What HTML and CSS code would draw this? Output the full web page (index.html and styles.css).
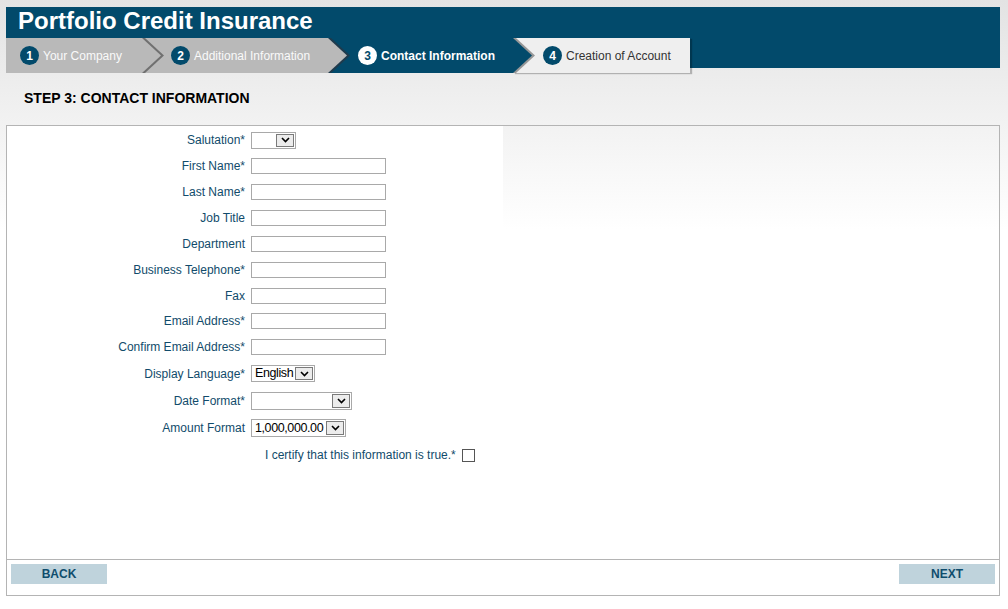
FILE: index.html
```html
<!DOCTYPE html>
<html lang="en">
<head>
    <meta charset="UTF-8">
    <meta name="viewport" content="width=device-width, initial-scale=1.0">
    <title>Portfolio Credit Insurance - Contact Information</title>
    <link rel="stylesheet" href="styles.css">
</head>
<body>
    <div class="header">
        <h1 class="title">Portfolio Credit Insurance</h1>
        <ol class="steps">
            <li class="step step-1"><span class="num">1</span>Your Company</li>
            <li class="step step-2"><span class="num">2</span>Additional Information</li>
            <li class="step step-3"><span class="num">3</span>Contact Information</li>
            <li class="step step-4"><span class="num">4</span>Creation of Account</li>
        </ol>
    </div>

    <h2 class="step-title">STEP 3: CONTACT INFORMATION</h2>

    <div class="panel">
        <form class="form">
            <div class="row">
                <label class="label">Salutation*</label>
                <span class="select sel-salutation">
                    <select><option></option><option>Mr</option><option>Mrs</option></select>
                    <span class="arrow"><svg width="9" height="6" viewBox="0 0 9 6"><polyline points="1,1 4.5,4.5 8,1" fill="none" stroke="#000" stroke-width="1.6"/></svg></span>
                </span>
            </div>
            <div class="row">
                <label class="label">First Name*</label>
                <input type="text" class="field">
            </div>
            <div class="row">
                <label class="label">Last Name*</label>
                <input type="text" class="field">
            </div>
            <div class="row">
                <label class="label">Job Title</label>
                <input type="text" class="field">
            </div>
            <div class="row">
                <label class="label">Department</label>
                <input type="text" class="field">
            </div>
            <div class="row">
                <label class="label">Business Telephone*</label>
                <input type="text" class="field">
            </div>
            <div class="row row-short">
                <label class="label">Fax</label>
                <input type="text" class="field">
            </div>
            <div class="row">
                <label class="label">Email Address*</label>
                <input type="text" class="field">
            </div>
            <div class="row">
                <label class="label">Confirm Email Address*</label>
                <input type="text" class="field">
            </div>
            <div class="row row-select">
                <label class="label">Display Language*</label>
                <span class="select sel-language">
                    <select><option>English</option></select>
                    <span class="arrow"><svg width="9" height="6" viewBox="0 0 9 6"><polyline points="1,1 4.5,4.5 8,1" fill="none" stroke="#000" stroke-width="1.6"/></svg></span>
                </span>
            </div>
            <div class="row row-select">
                <label class="label">Date Format*</label>
                <span class="select sel-date">
                    <select><option></option></select>
                    <span class="arrow"><svg width="9" height="6" viewBox="0 0 9 6"><polyline points="1,1 4.5,4.5 8,1" fill="none" stroke="#000" stroke-width="1.6"/></svg></span>
                </span>
            </div>
            <div class="row row-amount">
                <label class="label">Amount Format</label>
                <span class="select sel-amount">
                    <select><option>1,000,000.00</option></select>
                    <span class="arrow"><svg width="9" height="6" viewBox="0 0 9 6"><polyline points="1,1 4.5,4.5 8,1" fill="none" stroke="#000" stroke-width="1.6"/></svg></span>
                </span>
            </div>
            <div class="row row-certify">
                <label class="certify">I certify that this information is true.* <input type="checkbox" class="check"></label>
            </div>
        </form>

        <div class="footer">
            <button type="button" class="btn">BACK</button>
            <button type="button" class="btn">NEXT</button>
        </div>
    </div>
</body>
</html>
```

FILE: styles.css
```css
html {
    background-color: #fff;
}

body {
    margin: 0;
    padding: 7px 8px 0 6px;
    font-family: "Liberation Sans", Arial, sans-serif;
    font-size: 12px;
    background: linear-gradient(to bottom, #e3e3e3 0, #ffffff 230px) no-repeat;
}

/* header with title and step tabs */
.header {
    background: linear-gradient(to bottom, #024a6b 61px, transparent 61px);
}

.title {
    margin: 0;
    padding: 0 0 5px 12px;
    height: 26px;
    line-height: 27px;
    font-size: 24px;
    font-weight: bold;
    color: #fff;
}

.steps {
    display: flex;
    margin: 0;
    padding: 0;
    list-style: none;
}

.step {
    position: relative;
    display: flex;
    align-items: center;
    box-sizing: border-box;
    height: 35px;
    font-size: 12px;
    white-space: nowrap;
}

.step::before,
.step::after {
    content: "";
    position: absolute;
    top: 0;
    left: 100%;
    height: 35px;
}

.step::before {
    width: 19px;
    z-index: 2;
    clip-path: polygon(0 0, 19px 50%, 0 100%);
}

.step::after {
    width: 22px;
    z-index: 1;
    clip-path: polygon(0 0, 3px 0, 22px 50%, 3px 100%, 0 100%);
}

.num {
    display: inline-flex;
    align-items: center;
    justify-content: center;
    width: 19px;
    height: 19px;
    margin-right: 4px;
    border-radius: 50%;
    background-color: #024a6b;
    color: #fff;
    font-weight: bold;
    font-size: 12px;
}

.step-1 {
    width: 136px;
    padding-left: 14px;
    background-color: #b9b9b9;
    color: #fafafa;
}

.step-1::before { background-color: #b9b9b9; }
.step-1::after { background-color: #707070; }

.step-2 {
    width: 186px;
    padding-left: 29px;
    background-color: #b9b9b9;
    color: #fafafa;
}

.step-2::before { background-color: #b9b9b9; }
.step-2::after { background-color: #1f3b4d; }

.step-3 {
    width: 185px;
    padding-left: 30px;
    background-color: #024a6b;
    color: #fff;
    font-weight: bold;
}

.step-3::before { background-color: #024a6b; }
.step-3::after { background-color: #979797; }

.step-3 .num {
    background-color: #fff;
    color: #024a6b;
}

.step-4 {
    width: 177px;
    padding-left: 30px;
    background-color: #efefef;
    color: #333;
    box-shadow: 2px 1px 1px rgba(0, 0, 0, 0.25);
}

.step-4::before,
.step-4::after {
    display: none;
}

.step-title {
    margin: 0;
    padding: 17px 0 19px 18px;
    font-size: 14px;
    line-height: 16px;
    font-weight: bold;
    color: #000;
}

/* form panel */
.panel {
    border: 1px solid #b4b4b4;
}

.form {
    box-sizing: border-box;
    width: 496px;
    height: 433px;
    padding-top: 1px;
    background-color: #fff;
}

.row {
    display: flex;
    align-items: center;
    height: 26px;
}

.row-short {
    height: 25px;
}

.row-select {
    height: 27px;
}

.row-amount {
    height: 28px;
}

.row-certify {
    padding-left: 258px;
}

.label {
    box-sizing: border-box;
    width: 244px;
    padding-right: 6px;
    text-align: right;
    color: #114b6b;
}

.field {
    box-sizing: border-box;
    width: 135px;
    height: 16px;
    margin: 0;
    padding: 0 2px;
    border: 1px solid #a9a9a9;
    font-family: inherit;
    font-size: 12px;
}

.select {
    display: inline-flex;
    box-sizing: border-box;
    height: 17px;
    padding: 1px;
    border: 1px solid #a9a9a9;
    background-color: #fff;
}

.select select {
    flex: 1;
    min-width: 0;
    height: 100%;
    margin: 0;
    padding: 0 0 0 2px;
    border: 0;
    background: transparent;
    appearance: none;
    -webkit-appearance: none;
    font-family: inherit;
    font-size: 12.5px;
    letter-spacing: -0.4px;
    color: #000;
    line-height: 13px;
}

.arrow {
    display: flex;
    align-items: center;
    justify-content: center;
    box-sizing: border-box;
    width: 18px;
    border: 1px solid #7a7a7a;
    background-color: #ececec;
}

.sel-salutation { width: 45px; }
.sel-language { width: 64px; }
.sel-date { width: 101px; height: 18px; }
.sel-amount { width: 95px; height: 18px; }

.certify {
    display: flex;
    align-items: center;
    color: #114b6b;
}

.check {
    appearance: none;
    -webkit-appearance: none;
    box-sizing: border-box;
    width: 13px;
    height: 13px;
    margin: 0 0 0 6px;
    border: 1px solid #555;
    background-color: #fff;
}

.footer {
    display: flex;
    justify-content: space-between;
    box-sizing: border-box;
    height: 36px;
    padding: 4px 4px 0 4px;
    border-top: 1px solid #b4b4b4;
}

.btn {
    width: 96px;
    height: 20px;
    padding: 0;
    border: 0;
    background-color: #bfd3dc;
    color: #0f4d6d;
    font-family: inherit;
    font-size: 12px;
    font-weight: bold;
}
```
